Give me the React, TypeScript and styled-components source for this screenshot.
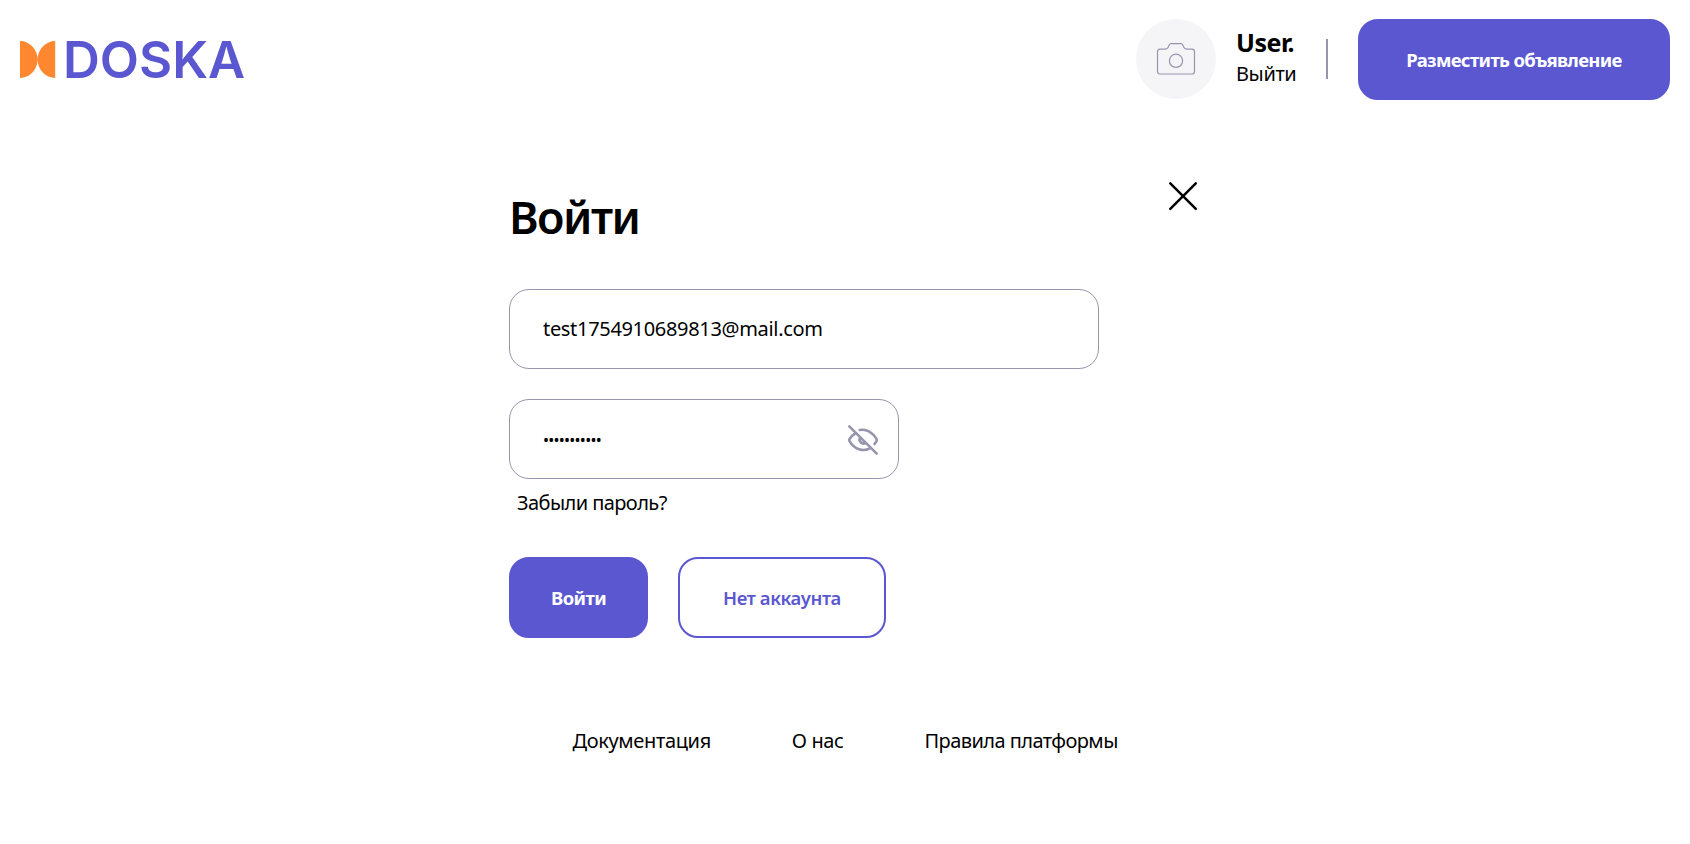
import React from "react";
import styled, { createGlobalStyle } from "styled-components";

const purple = "#5a57d1";
const grey = "#9795ae";

const GlobalStyle = createGlobalStyle`
  * { box-sizing: border-box; }
  body { margin: 0; background: #fff; color: #000; font-family: "Noto Sans", "Open Sans", sans-serif; }
  button, input { font-family: inherit; }
`;

const Page = styled.div`
  height: 844px;
  overflow: hidden;
`;

const Header = styled.header`
  display: flex;
  justify-content: space-between;
  padding: 19px 20px 0;
  height: 100px;
`;

const Logo = styled.div`
  display: flex;
  align-items: flex-start;
  padding-top: 22px;
  gap: 7px;
  svg { display: block; flex: none; }
`;

const LogoText = styled.span`
  font-family: Inter, "Noto Sans", sans-serif;
  font-size: 51px;
  line-height: 37px;
  font-weight: 600;
  letter-spacing: 0;
  color: ${purple};
`;

const HeaderRight = styled.div`
  display: flex;
  align-items: flex-start;
`;

const Avatar = styled.div`
  width: 80px;
  height: 80px;
  border-radius: 50%;
  background: #f5f5f8;
  display: flex;
  align-items: center;
  justify-content: center;
`;

const UserInfo = styled.div`
  width: 109px;
  padding: 6px 0 0 20px;
  white-space: nowrap;
`;

const UserName = styled.div`
  font-size: 25px;
  line-height: 34px;
  height: 35px;
  font-weight: 700;
  letter-spacing: -0.5px;
`;

const Label = styled.a<{ $spacing?: number }>`
  display: block;
  font-size: 20px;
  line-height: 28px;
  letter-spacing: ${(p) => p.$spacing ?? 0}px;
  white-space: nowrap;
`;

const Divider = styled.div`
  width: 2px;
  height: 40px;
  margin: 20px 30px 0 1px;
  background: ${grey};
`;

const Button = styled.button<{ $width: number; $outline?: boolean; $spacing?: number }>`
  width: ${(p) => p.$width}px;
  height: 81px;
  padding: 0;
  border: 2px solid ${purple};
  border-radius: 20px;
  background: ${(p) => (p.$outline ? "#fff" : purple)};
  color: ${(p) => (p.$outline ? purple : "#fff")};
  font-size: 18.5px;
  font-weight: ${(p) => (p.$outline ? 600 : 700)};
  letter-spacing: ${(p) => p.$spacing ?? 0}px;
  white-space: nowrap;
`;

const Form = styled.form`
  width: 690px;
  margin: 80px 0 0 509px;
`;

const TitleRow = styled.div`
  display: flex;
  justify-content: space-between;
  height: 109px;
`;

const Title = styled.h1`
  margin: 7px 0 0;
  font-size: 45px;
  line-height: 60px;
  font-weight: 600;
  letter-spacing: -1.5px;
`;

const CloseIcon = styled.svg`
  margin: 1px 1px 0 0;
`;

const Field = styled.div<{ $width: number }>`
  display: flex;
  align-items: center;
  width: ${(p) => p.$width}px;
  height: 80px;
  padding: 0 19px 0 33px;
  border: 1px solid ${grey};
  border-radius: 20px;
  & + & { margin-top: 30px; }
`;

const Input = styled.input<{ $size?: number; $spacing?: number }>`
  flex: 1;
  min-width: 0;
  padding: 0 0 2px;
  border: 0;
  outline: 0;
  background: transparent;
  color: #000;
  font-size: ${(p) => p.$size ?? 20}px;
  letter-spacing: ${(p) => p.$spacing ?? 0}px;
  &[type="password"] { padding: 2px 0 0; }
`;

const EyeIcon = styled.svg`
  flex: none;
  margin-top: 1px;
`;

const Forgot = styled.div`
  padding: 10px 0 0 8px;
  height: 78px;
`;

const Actions = styled.div`
  display: flex;
  gap: 30px;
`;

const Footer = styled.footer`
  display: flex;
  gap: 81px;
  margin: 89px 0 0 572.5px;
`;

export default function App() {
  return (
    <Page>
      <GlobalStyle />
      <Header>
        <Logo>
          <svg width="36" height="37" viewBox="0 0 36 37" fill="#ff8730">
            <path d="M0 0A17.6 18.5 0 0 1 0 37ZM35.2 0A17.6 18.5 0 0 0 35.2 37Z" />
          </svg>
          <LogoText>DOSKA</LogoText>
        </Logo>
        <HeaderRight>
          <Avatar>
            <svg width="40" height="34" viewBox="0 0 40 34" fill="none" stroke={grey} strokeWidth="1.2">
              <path d="M4 7.2H9C10.5 7.2 11.4 6.8 12 5.6L13.2 3.1C13.6 2.2 14 1.7 15 1.7H25C26 1.7 26.4 2.2 26.8 3.1L28 5.6C28.6 6.8 29.5 7.2 31 7.2H36Q38.5 7.2 38.5 9.7V29.5Q38.5 32 36 32H4Q1.5 32 1.5 29.5V9.7Q1.5 7.2 4 7.2Z" />
              <circle cx="20" cy="18.8" r="6.6" />
            </svg>
          </Avatar>
          <UserInfo>
            <UserName>User.</UserName>
            <Label $spacing={-0.4}>Выйти</Label>
          </UserInfo>
          <Divider />
          <Button $width={312} $spacing={-0.66}>Разместить объявление</Button>
        </HeaderRight>
      </Header>
      <Form>
        <TitleRow>
          <Title>Войти</Title>
          <CloseIcon width="30" height="30" viewBox="0 0 30 30" fill="none" stroke="#000" strokeWidth="2.5" strokeLinecap="round">
            <path d="M2.3 2.3L27.8 27.8M27.8 2.3L2.3 27.8" />
          </CloseIcon>
        </TitleRow>
        <Field $width={590}>
          <Input type="email" $spacing={-0.32} defaultValue="test1754910689813@mail.com" />
        </Field>
        <Field $width={390}>
          <Input type="password" $size={16} $spacing={-0.75} defaultValue="password123" />
          <EyeIcon width="32" height="32" viewBox="0 0 32 32" fill="none" stroke={grey} strokeWidth="2.6" strokeLinecap="round" strokeLinejoin="round">
            <path d="M2.3 2.3L29.7 29.7M12.7 6C19.5 4.6 26 8.5 29.6 15.2Q30 16 29.6 16.8Q28.7 18.5 27.5 20M8.6 9.2Q4.6 11.7 2.4 15.2Q2 16 2.4 16.8C7.2 25.2 16.4 28.8 23.7 23.6M13.3 13.2A4 4 0 0 0 18.8 18.8" />
          </EyeIcon>
        </Field>
        <Forgot>
          <Label $spacing={-0.57}>Забыли пароль?</Label>
        </Forgot>
        <Actions>
          <Button type="button" $width={139} $spacing={-0.6}>Войти</Button>
          <Button type="button" $width={208} $spacing={-0.4} $outline>Нет аккаунта</Button>
        </Actions>
      </Form>
      <Footer>
        <Label $spacing={-0.35}>Документация</Label>
        <Label $spacing={-0.4}>О нас</Label>
        <Label $spacing={-0.57}>Правила платформы</Label>
      </Footer>
    </Page>
  );
}
